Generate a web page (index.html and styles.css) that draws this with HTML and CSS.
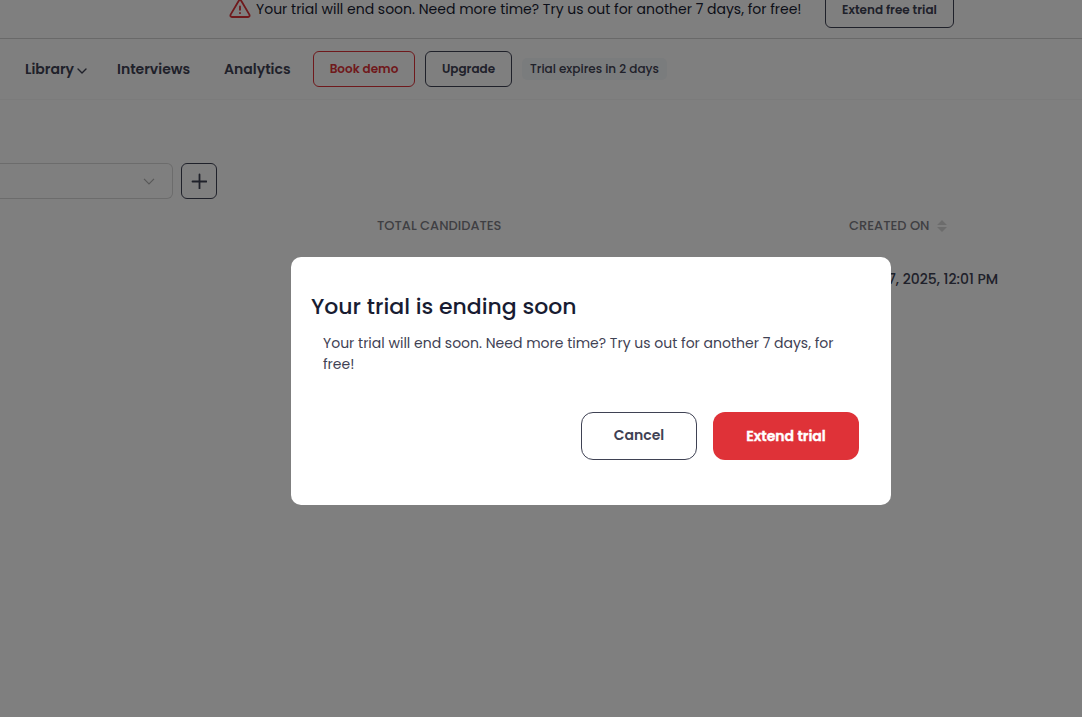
FILE: index.html
```html
<!DOCTYPE html>
<html lang="en">
<head>
    <meta charset="UTF-8">
    <meta name="viewport" content="width=device-width, initial-scale=1.0">
    <title>Library</title>
    <link rel="stylesheet" href="styles.css">
</head>
<body>
    <div class="banner">
        <svg class="warning-icon" width="22" height="20" viewBox="0 0 22 20" fill="none" stroke="#df3238" stroke-width="1.8" stroke-linejoin="round" stroke-linecap="round">
            <path d="M9.5 2.2 1.6 15.6Q.8 17.8 3 18H19Q21.2 17.8 20.4 15.6L12.5 2.2Q11 .2 9.5 2.2Z"/>
            <path d="M11 7.5V10.8M11 14V14.2"/>
        </svg>
        <span class="banner-text">Your trial will end soon. Need more time? Try us out for another 7 days, for free!</span>
        <button class="btn btn-extend">Extend free trial</button>
    </div>

    <header class="navbar">
        <nav class="nav-links">
            <a class="library">Library
                <svg width="10" height="6" viewBox="0 0 10 6" fill="none" stroke="currentColor" stroke-width="1.4" stroke-linecap="round" stroke-linejoin="round"><path d="M1 1 5 5 9 1"/></svg>
            </a>
            <a class="interviews">Interviews</a>
            <a class="analytics">Analytics</a>
        </nav>
        <button class="btn btn-demo">Book demo</button>
        <button class="btn btn-upgrade">Upgrade</button>
        <span class="trial-tag">Trial expires in 2 days</span>
    </header>

    <main>
        <div class="toolbar">
            <div class="select">
                <svg width="12" height="7" viewBox="0 0 12 7" fill="none" stroke="#b0b0b0" stroke-width="1.2"><path d="M1 .8 6 6 11 .8"/></svg>
            </div>
            <button class="btn btn-add" aria-label="Add">
                <svg width="16" height="16" viewBox="0 0 16 16" stroke="#3f4254" stroke-width="1.8" stroke-linecap="round"><path d="M8.5 1.5V15.5M1.5 8.5H15.5"/></svg>
            </button>
        </div>
        <div class="table-head">
            <span class="col-total">TOTAL CANDIDATES</span>
            <span class="col-created">CREATED ON</span>
            <svg class="sort-icon" width="10" height="12" viewBox="0 0 10 12" fill="#d9d9d9"><path d="M5 0 10 5H0ZM5 12 0 7H10Z"/></svg>
        </div>
        <div class="table-row">
            <span class="date">7, 2025, 12:01 PM</span>
        </div>
    </main>

    <div class="overlay">
        <div class="modal">
            <h2>Your trial is ending soon</h2>
            <p>Your trial will end soon. Need more time? Try us out for another 7 days, for<br>free!</p>
            <div class="modal-actions">
                <button class="btn btn-cancel">Cancel</button>
                <button class="btn btn-confirm">Extend trial</button>
            </div>
        </div>
    </div>
</body>
</html>
```

FILE: styles.css
```css
* {
    box-sizing: border-box;
}
body {
    margin: 0;
    height: 100vh;
    overflow: hidden;
    background-color: #fff;
    color: #3f4254;
    font-family: Poppins, Inter, sans-serif;
    font-size: 14px;
    white-space: nowrap;
}
.btn {
    display: flex;
    align-items: center;
    justify-content: center;
    height: 36px;
    padding: 0;
    background-color: transparent;
    border: 1px solid #3f4254;
    border-radius: 6px;
    color: #3f4254;
    font-family: inherit;
    font-size: 12px;
    font-weight: 600;
    flex-shrink: 0;
}
.banner {
    display: flex;
    align-items: flex-end;
    height: 39px;
    padding: 0 0 10px 229px;
    border-bottom: 1px solid #d3d3d3;
    color: #181c32;
}
.warning-icon {
    margin-bottom: 9px;
}
.banner-text {
    width: 569px;
    margin-left: 5px;
    line-height: 38px;
}
.btn-extend {
    width: 129px;
}
.navbar {
    display: flex;
    align-items: center;
    height: 61px;
    padding-left: 25px;
    border-bottom: 1px solid #f7f7f7;
}
.nav-links {
    display: flex;
    width: 288px;
    font-weight: 600;
}
.library {
    width: 92px;
}
.library svg {
    margin-bottom: 0;
}
.interviews {
    width: 107px;
}
.btn-demo {
    width: 102px;
    border-color: #df3238;
    color: #df3238;
}
.btn-upgrade {
    width: 87px;
    margin-left: 10px;
}
.trial-tag {
    height: 22px;
    width: 145px;
    margin-left: 10px;
    padding-left: 8px;
    background-color: #f5f8fa;
    border-radius: 5px;
    font-size: 12px;
    font-weight: 500;
    line-height: 22px;
}
.toolbar {
    display: flex;
    gap: 8px;
    margin-top: 63px;
}
.select {
    display: flex;
    align-items: center;
    justify-content: flex-end;
    width: 173px;
    height: 36px;
    padding-right: 17px;
    border: 1px solid #d8d8d8;
    border-left: 0;
    border-radius: 0 6px 6px 0;
}
.btn-add {
    width: 36px;
}
.table-head {
    display: flex;
    align-items: center;
    height: 54px;
    padding-left: 377px;
    color: #7e7e86;
    font-size: 13px;
    font-weight: 500;
}
.col-total {
    width: 472px;
}
.col-created {
    width: 88px;
}
.sort-icon {
    margin-bottom: 1px;
}
.table-row {
    display: flex;
    align-items: center;
    height: 52px;
    padding-left: 888px;
    font-weight: 500;
}
.overlay {
    position: fixed;
    inset: 0;
    padding: 257px 0 0 291px;
    background-color: rgba(0, 0, 0, .5);
}
.modal {
    width: 600px;
    height: 248px;
    padding: 33px 32px 0 20px;
    background-color: #fff;
    border-radius: 10px;
}
.modal h2 {
    margin: 0;
    color: #181c32;
    font-size: 22px;
    font-weight: 500;
    line-height: 34px;
}
.modal p {
    margin: 9px 0 0 12px;
    line-height: 21px;
}
.modal-actions {
    display: flex;
    justify-content: flex-end;
    gap: 16px;
    margin-top: 37px;
}
.modal .btn {
    height: 48px;
    border-radius: 12px;
    font-size: 14px;
}
.modal .btn-cancel {
    width: 116px;
    padding-bottom: 2px;
}
.modal .btn-confirm {
    width: 146px;
    border: 0;
    background-color: #df3238;
    color: #fff;
    -webkit-text-stroke: .4px #fff;
}
```
